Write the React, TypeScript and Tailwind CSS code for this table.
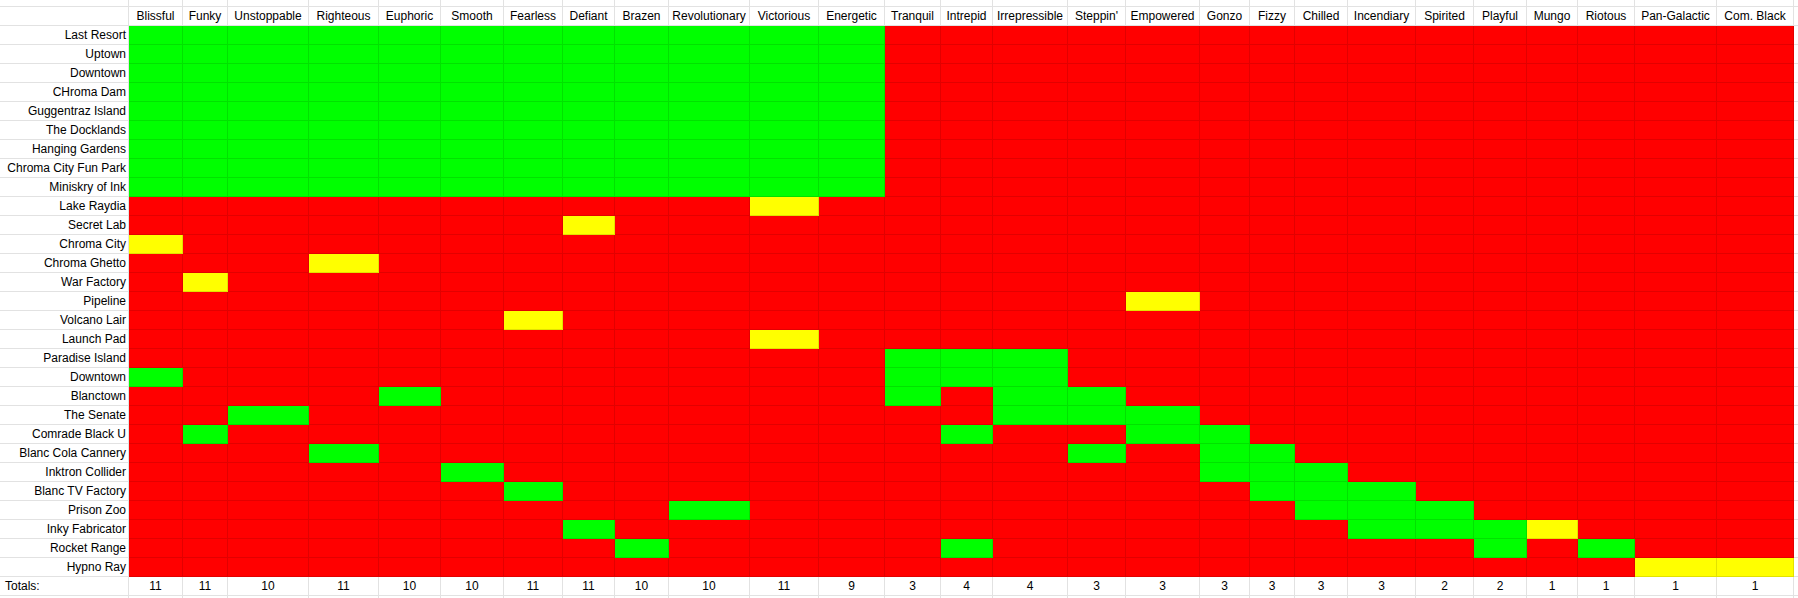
import React from "react";

const cols: { name: string; total: number }[] = [
  { name: "Blissful", total: 11 },
  { name: "Funky", total: 11 },
  { name: "Unstoppable", total: 10 },
  { name: "Righteous", total: 11 },
  { name: "Euphoric", total: 10 },
  { name: "Smooth", total: 10 },
  { name: "Fearless", total: 11 },
  { name: "Defiant", total: 11 },
  { name: "Brazen", total: 10 },
  { name: "Revolutionary", total: 10 },
  { name: "Victorious", total: 11 },
  { name: "Energetic", total: 9 },
  { name: "Tranquil", total: 3 },
  { name: "Intrepid", total: 4 },
  { name: "Irrepressible", total: 4 },
  { name: "Steppin'", total: 3 },
  { name: "Empowered", total: 3 },
  { name: "Gonzo", total: 3 },
  { name: "Fizzy", total: 3 },
  { name: "Chilled", total: 3 },
  { name: "Incendiary", total: 3 },
  { name: "Spirited", total: 2 },
  { name: "Playful", total: 2 },
  { name: "Mungo", total: 1 },
  { name: "Riotous", total: 1 },
  { name: "Pan-Galactic", total: 1 },
  { name: "Com. Black", total: 1 },
];

type Row = { label: string; g: number[]; y: number[] };

const topGreen = [0, 1, 2, 3, 4, 5, 6, 7, 8, 9, 10, 11];

const rows: Row[] = [
  { label: "Last Resort", g: topGreen, y: [] },
  { label: "Uptown", g: topGreen, y: [] },
  { label: "Downtown", g: topGreen, y: [] },
  { label: "CHroma Dam", g: topGreen, y: [] },
  { label: "Guggentraz Island", g: topGreen, y: [] },
  { label: "The Docklands", g: topGreen, y: [] },
  { label: "Hanging Gardens", g: topGreen, y: [] },
  { label: "Chroma City Fun Park", g: topGreen, y: [] },
  { label: "Miniskry of Ink", g: topGreen, y: [] },
  { label: "Lake Raydia", g: [], y: [10] },
  { label: "Secret Lab", g: [], y: [7] },
  { label: "Chroma City", g: [], y: [0] },
  { label: "Chroma Ghetto", g: [], y: [3] },
  { label: "War Factory", g: [], y: [1] },
  { label: "Pipeline", g: [], y: [16] },
  { label: "Volcano Lair", g: [], y: [6] },
  { label: "Launch Pad", g: [], y: [10] },
  { label: "Paradise Island", g: [12, 13, 14], y: [] },
  { label: "Downtown", g: [0, 12, 13, 14], y: [] },
  { label: "Blanctown", g: [4, 12, 14, 15], y: [] },
  { label: "The Senate", g: [2, 14, 15, 16], y: [] },
  { label: "Comrade Black U", g: [1, 13, 16, 17], y: [] },
  { label: "Blanc Cola Cannery", g: [3, 15, 17, 18], y: [] },
  { label: "Inktron Collider", g: [5, 17, 18, 19], y: [] },
  { label: "Blanc TV Factory", g: [6, 18, 19, 20], y: [] },
  { label: "Prison Zoo", g: [9, 19, 20, 21], y: [] },
  { label: "Inky Fabricator", g: [7, 20, 21, 22], y: [23] },
  { label: "Rocket Range", g: [8, 13, 22, 24], y: [] },
  { label: "Hypno Ray", g: [], y: [25, 26] },
];

const line = "border-b border-r border-[#0000001d]";
const cell = `h-[19px] ${line} flex items-end pb-[1px] leading-[15px] overflow-hidden whitespace-nowrap`;

export default function App() {
  return (
    <div
      className="w-[1798px] h-[598px] overflow-hidden bg-white text-black text-[12px]"
      style={{ fontFamily: '"Liberation Sans", Arial, sans-serif' }}
    >
      <div className="grid grid-cols-[129px_54px_45px_81px_70px_62px_63px_59px_52px_54px_81px_69px_66px_56px_52px_75px_58px_74px_50px_45px_53px_68px_58px_53px_51px_57px_82px_77px_4px]">
        {/* top partial row */}
        <div className={`h-[7px] ${line}`} />
        {cols.map((c) => (
          <div key={"t" + c.name} className={`h-[7px] ${line}`} />
        ))}
        <div className="h-[7px] border-b border-[#0000001d]" />

        {/* header row */}
        <div className={cell} />
        {cols.map((c) => (
          <div key={"h" + c.name} className={`${cell} justify-center`}>
            {c.name}
          </div>
        ))}
        <div className="h-[19px] border-b border-[#0000001d]" />

        {/* data rows */}
        {rows.map((r, ri) => (
          <React.Fragment key={"r" + ri}>
            <div className={`${cell} justify-end pr-[2px]`}>{r.label}</div>
            {cols.map((c, ci) => {
              const bg = r.g.includes(ci)
                ? "bg-[#00ff00]"
                : r.y.includes(ci)
                ? "bg-[#ffff00]"
                : "bg-[#ff0000]";
              return <div key={ci} className={`h-[19px] ${line} ${bg}`} />;
            })}
            <div className="h-[19px] border-b border-[#0000001d]" />
          </React.Fragment>
        ))}

        {/* totals row */}
        <div className={`${cell} pl-[5px]`}>Totals:</div>
        {cols.map((c) => (
          <div key={"s" + c.name} className={`${cell} justify-center`}>
            {c.total}
          </div>
        ))}
        <div className="h-[19px] border-b border-[#0000001d]" />

        {/* bottom partial row */}
        <div className="h-[3px] border-r border-[#0000001d]" />
        {cols.map((c) => (
          <div key={"b" + c.name} className="h-[3px] border-r border-[#0000001d]" />
        ))}
        <div className="h-[3px]" />
      </div>
    </div>
  );
}
